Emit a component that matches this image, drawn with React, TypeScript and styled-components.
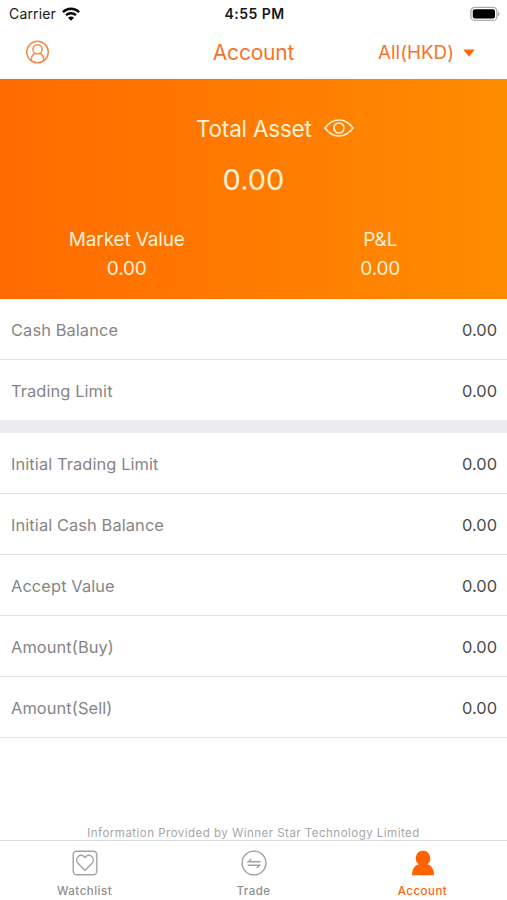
import React from "react";
import styled, { createGlobalStyle } from "styled-components";

const GlobalStyle = createGlobalStyle`
  * { box-sizing: border-box; }
  body { margin: 0; background: #fff; font-family: Inter, "Liberation Sans", sans-serif; }
`;

const Screen = styled.div`
  width: 507px;
  height: 900px;
  display: flex;
  flex-direction: column;
  overflow: hidden;
  background: #fff;
`;

const StatusBar = styled.div`
  height: 28px;
  display: grid;
  grid-template-columns: 1fr auto 1fr;
  align-items: center;
  padding: 0 7px 1px 9px;
  color: #17171a;
  font-size: 14px;
`;

const Carrier = styled.div`
  display: flex;
  align-items: center;
  gap: 6px;
  letter-spacing: 0.15px;
`;

const Clock = styled.div`
  font-weight: 600;
  font-size: 14px;
  letter-spacing: 0.45px;
`;

const Battery = styled.svg`
  justify-self: end;
`;

const NavBar = styled.header`
  height: 51px;
  display: grid;
  grid-template-columns: 1fr auto 1fr;
  align-items: center;
  padding: 0 32px 0 26px;
  color: #f5742a;
`;

const Title = styled.h1`
  margin: 0 -3px 3px 3px;
  font-size: 21px;
  font-weight: 400;
  letter-spacing: -0.2px;
`;

const ProfileIcon = styled.svg`
  margin-bottom: 3px;
`;

const CurrencyPicker = styled.div`
  justify-self: end;
  display: flex;
  align-items: center;
  gap: 9px;
  margin-bottom: 2px;
  font-size: 18.8px;
`;

const Hero = styled.section`
  height: 220px;
  background: linear-gradient(90deg, #ff6a00, #ff8c00);
  color: #fff0d8;
`;

const AssetLabel = styled.div`
  display: flex;
  align-items: center;
  gap: 12px;
  height: 30px;
  margin: 34px 0 0 196px;
  font-size: 22.5px;
  letter-spacing: -0.2px;
`;

const AssetTotal = styled.div`
  margin-top: 19px;
  height: 36px;
  line-height: 36px;
  text-align: center;
  font-size: 29px;
`;

const Metrics = styled.div`
  display: grid;
  grid-template-columns: 1fr 1fr;
  margin-top: 28px;
`;

const Metric = styled.div`
  text-align: center;
  font-size: 19px;
  line-height: 28.5px;
  letter-spacing: -0.15px;
`;

const List = styled.div`
  display: flex;
  flex-direction: column;
`;

const Row = styled.div<{ $last?: boolean }>`
  height: 61px;
  display: flex;
  justify-content: space-between;
  align-items: center;
  padding: 1px 10px 0 11px;
  border-bottom: 1px solid ${(p) => (p.$last ? "#ebebee" : "#e2e2e4")};
`;

const RowLabel = styled.span`
  font-size: 16.4px;
  color: #858585;
  letter-spacing: 0.1px;
`;

const RowValue = styled.span`
  font-size: 16.4px;
  color: #4a4a4a;
`;

const Gap = styled.div`
  height: 12px;
  background: #ebecef;
`;

const Notice = styled.div`
  margin-top: auto;
  height: 14px;
  line-height: 14px;
  text-align: center;
  font-size: 11.5px;
  letter-spacing: 0.48px;
  color: #a6a6a6;
`;

const TabBar = styled.nav`
  height: 60px;
  display: grid;
  grid-template-columns: repeat(3, 1fr);
  border-top: 1px solid #dcdcdc;
`;

const Tab = styled.div<{ $active?: boolean }>`
  display: flex;
  flex-direction: column;
  align-items: center;
  gap: 8px;
  padding-top: 9px;
  font-size: 11.5px;
  line-height: 14px;
  font-weight: 500;
  letter-spacing: 0.5px;
  color: ${(p) => (p.$active ? "#fb6412" : "#8e8e8e")};
`;

const accountRows = ["Cash Balance", "Trading Limit"];
const limitRows = ["Initial Trading Limit", "Initial Cash Balance", "Accept Value", "Amount(Buy)", "Amount(Sell)"];

function Rows({ labels, joined }: { labels: string[]; joined?: boolean }) {
  return (
    <List>
      {labels.map((label, i) => (
        <Row key={label} $last={joined && i === labels.length - 1}>
          <RowLabel>{label}</RowLabel>
          <RowValue>0.00</RowValue>
        </Row>
      ))}
    </List>
  );
}

export default function App() {
  return (
    <Screen>
      <GlobalStyle />
      <StatusBar>
        <Carrier>
          Carrier
          <svg width="18" height="14" viewBox="0 0 18 14" fill="none" stroke="#080808" strokeWidth="2.4">
            <path d="M0.9 5.1C5.4 0.7 12.6 0.7 17.1 5.1" />
            <path d="M4 8.2C6.8 5.5 11.2 5.5 14 8.2" />
            <path d="M9 13.8L6 10.7C7.6 9.2 10.4 9.2 12 10.7Z" fill="#080808" stroke="none" />
          </svg>
        </Carrier>
        <Clock>4:55 PM</Clock>
        <Battery width="31" height="16" viewBox="0 0 31 16">
          <rect x="1.9" y="1.4" width="26" height="13" rx="4" fill="#fff" stroke="#aaa" strokeWidth="1.3" />
          <rect x="3.8" y="3.2" width="22.2" height="9.4" rx="2" fill="#000" />
          <path d="M29 5.5C31 6.3 31 9.5 29 10.3Z" fill="#aaa" />
        </Battery>
      </StatusBar>
      <NavBar>
        <ProfileIcon width="24" height="24" viewBox="0 0 24 24" fill="none" stroke="#f58a49" strokeWidth="1.5">
          <circle cx="11.5" cy="12" r="10.8" />
          <circle cx="11.5" cy="9.3" r="4.6" />
          <path d="M5.2 20.2C5.4 16.7 6.6 14.4 9 13.3M17.8 20.2C17.6 16.7 16.4 14.4 14 13.3" />
        </ProfileIcon>
        <Title>Account</Title>
        <CurrencyPicker>
          All(HKD)
          <svg width="12" height="8" viewBox="0 0 12 8"><path d="M0.2 0.5H11.8L6 7.7Z" fill="#ff6a0a" /></svg>
        </CurrencyPicker>
      </NavBar>
      <Hero>
        <AssetLabel>
          Total Asset
          <svg width="30" height="18" viewBox="0 0 30 18" fill="none" stroke="#fff0d8" strokeWidth="1.7">
            <path d="M1 9C5 3.6 9.6 1 15 1S25 3.6 29 9C25 14.4 20.4 17 15 17S5 14.4 1 9Z" />
            <circle cx="15" cy="9" r="5" />
          </svg>
        </AssetLabel>
        <AssetTotal>0.00</AssetTotal>
        <Metrics>
          <Metric>Market Value<br />0.00</Metric>
          <Metric>P&amp;L<br />0.00</Metric>
        </Metrics>
      </Hero>
      <Rows labels={accountRows} joined />
      <Gap />
      <Rows labels={limitRows} />
      <Notice>Information Provided by Winner Star Technology Limited</Notice>
      <TabBar>
        <Tab>
          <svg width="26" height="26" viewBox="0 0 26 26" fill="none" stroke="#a3a3a3" strokeWidth="1.4">
            <rect x="1.2" y="1.2" width="23.6" height="23.6" rx="3.5" />
            <path d="M13 20.6L6.2 13.6C1.6 8.6 8.8 1.6 13 7.6C17.2 1.6 24.4 8.6 19.8 13.6Z" />
          </svg>
          Watchlist
        </Tab>
        <Tab>
          <svg width="26" height="26" viewBox="0 0 26 26" fill="none" stroke="#a0a0a0" strokeWidth="1.4">
            <circle cx="13" cy="13" r="11.9" />
            <path d="M19.3 11.7H7.3L10.2 9M6.8 15.3H18.7L15.8 18" />
          </svg>
          Trade
        </Tab>
        <Tab $active>
          <svg width="26" height="26" viewBox="0 0 26 26" fill="#ff6200">
            <path d="M13 0.8A7.4 7.4 0 0 1 17.2 14.2C21.6 15.4 24 19.1 24 25.3H2C2 19.1 4.4 15.4 8.8 14.2A7.4 7.4 0 0 1 13 0.8Z" />
          </svg>
          Account
        </Tab>
      </TabBar>
    </Screen>
  );
}
